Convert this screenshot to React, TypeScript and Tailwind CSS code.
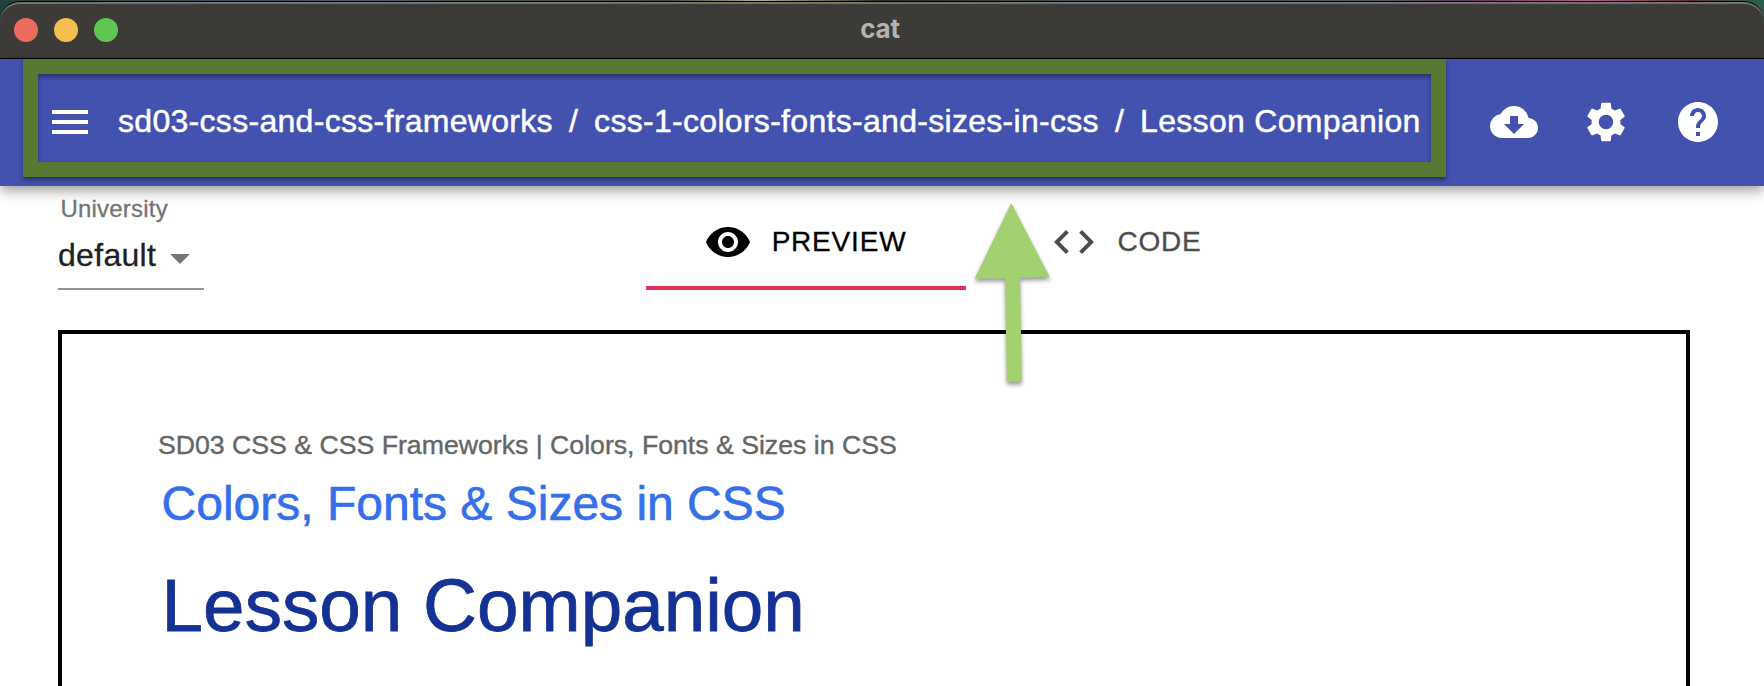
import {
  MdArrowDropDown,
  MdCloudDownload,
  MdCode,
  MdHelp,
  MdMenu,
  MdSettings,
  MdVisibility,
} from "react-icons/md";

const crumbs = ["sd03-css-and-css-frameworks", "css-1-colors-fonts-and-sizes-in-css", "Lesson Companion"];

function TitleBar() {
  return (
    <div className="h-[59px] shrink-0 bg-[linear-gradient(90deg,#23403f_0%,#4a5566_20%,#3f4a3a_38%,#b0a888_43%,#2c3020_50%,#3f4a55_60%,#4a5560_78%,#6b3a5a_84%,#b05a90_90%,#5a3038_96%,#2f5a4c_99%)] pt-px">
      <div className="relative flex h-[58px] items-center justify-center rounded-t-[20px] border-b border-t border-black bg-[#3c3b38] pb-[2px] pr-1 shadow-[inset_0_2px_0_#73726d]">
        <div className="absolute left-[14px] top-[16px] flex gap-4">
          <span className="size-6 rounded-full bg-[#ed6a5f]" />
          <span className="size-6 rounded-full bg-[#f5bf4f]" />
          <span className="size-6 rounded-full bg-[#61c554]" />
        </div>
        <span className="font-['Inter',sans-serif] text-[26px] font-bold leading-none tracking-[-0.2px] text-[#b3b3b1]">
          cat
        </span>
      </div>
    </div>
  );
}

function AppBar() {
  return (
    <header className="relative z-10 flex h-[127px] shrink-0 items-start justify-between bg-[#4351af] pl-[23px] pr-[42px] shadow-[0_4px_8px_-2px_rgba(0,0,0,0.2),0_8px_10px_0_rgba(0,0,0,0.14),0_2px_20px_0_rgba(0,0,0,0.12)]">
      <div className="flex h-[118px] w-[1423px] items-center border-[15px] border-[#587933] pl-2 shadow-[0_3px_4px_rgba(0,0,0,0.4),inset_0_3px_4px_rgba(0,0,0,0.4)]">
        <MdMenu className="mt-2 size-12 shrink-0 text-white" />
        <nav className="ml-6 mt-[6px] flex whitespace-pre text-[32px] leading-[48px] tracking-[0.3px] text-white [-webkit-text-stroke:0.5px_currentColor]">
          {crumbs.map((crumb, i) => (
            <span key={crumb} className="flex">
              {i > 0 && <span className="mx-4">/</span>}
              <span>{crumb}</span>
            </span>
          ))}
        </nav>
      </div>
      <div className="mt-[39px] flex gap-11 text-white">
        <MdCloudDownload className="size-12" />
        <MdSettings className="size-12" />
        <MdHelp className="size-12" />
      </div>
    </header>
  );
}

function Toolbar() {
  return (
    <div className="flex h-[104px] items-end pl-[58px] [-webkit-text-stroke:0.3px_currentColor]">
      <div className="flex h-[95px] w-[146px] flex-col border-b-2 border-[#949494]">
        <span className="pl-[2.5px] text-[24px] leading-7 tracking-[0.2px] text-[#757575]">University</span>
        <span className="mt-2 flex h-[48px] items-center text-[32px] leading-[38px] tracking-[0.3px] text-[#212121]">
          <span className="mb-px">default</span>
          <MdArrowDropDown className="mt-[5px] size-12 shrink-0 text-[#757575]" strokeWidth={0} />
        </span>
      </div>
      <div className="ml-[442px] flex h-24 text-[28px] tracking-[0.8px]">
        <div className="flex w-[320px] items-center justify-center gap-5 border-b-4 border-[#e33059] pr-[2px] pt-1 text-black">
          <MdVisibility className="size-12" />
          <span>PREVIEW</span>
        </div>
        <div className="flex w-[320px] items-center justify-center gap-[19px] border-b-4 border-transparent pt-1 text-[#4d4d4d]">
          <MdCode className="size-12" />
          <span>CODE</span>
        </div>
      </div>
    </div>
  );
}

function PointerArrow() {
  return (
    <svg
      className="absolute left-[964px] top-[193px] z-20 h-[204px] w-[98px] drop-shadow-[0_3px_2px_rgba(0,0,0,0.4)]"
      viewBox="964 193 98 204"
    >
      <polygon
        points="1011.3,203 1049.8,277 1020,277.8 1021.8,381.4 1006.8,381.8 1005,278.3 974.6,278.8"
        fill="#a3d16f"
      />
    </svg>
  );
}

export default function App() {
  return (
    <div className="relative flex h-[686px] w-[1764px] flex-col overflow-hidden bg-white font-['Liberation_Sans',Arial,sans-serif]">
      <TitleBar />
      <AppBar />
      <Toolbar />
      <main className="ml-[58px] mt-10 w-[1632px] flex-1 border-4 border-b-0 border-black pl-24 pt-[95px] [-webkit-text-stroke:0.4px_currentColor]">
        <p className="text-[26.667px] leading-8 text-[#666666]">
          SD03 CSS &amp; CSS Frameworks | Colors, Fonts &amp; Sizes in CSS
        </p>
        <h2 className="ml-[3.6px] mt-[15px] text-[48px] leading-[56px] text-[#356fe9] [-webkit-text-stroke:0.6px_currentColor]">
          Colors, Fonts &amp; Sizes in CSS
        </h2>
        <h1 className="ml-[3.6px] mt-[30px] text-[74.667px] leading-[86px] text-[#133294] [-webkit-text-stroke:0.8px_currentColor]">
          Lesson Companion
        </h1>
      </main>
      <PointerArrow />
    </div>
  );
}
